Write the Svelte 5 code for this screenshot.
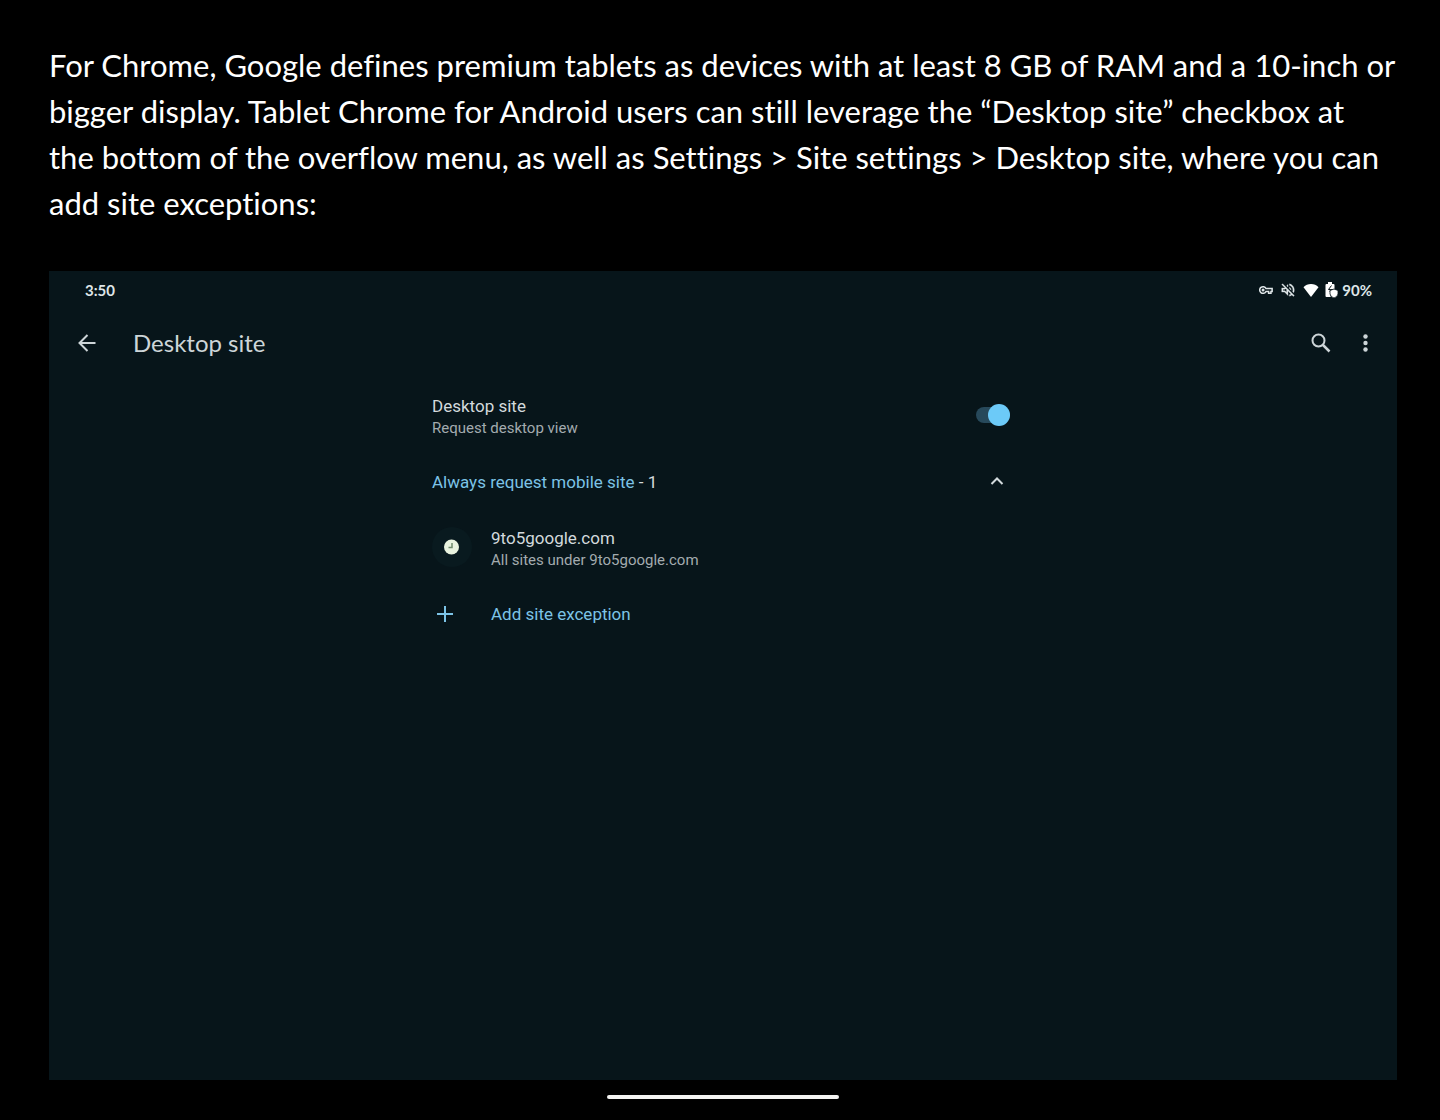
<script lang="ts">
  let desktopSite = true;
  let expanded = true;

  const exceptions = [
    { host: "9to5google.com", detail: "All sites under 9to5google.com" },
  ];
</script>

<style>
  :global(body) {
    margin: 0;
    background: #000;
  }

  .page {
    box-sizing: border-box;
    min-height: 100vh;
    padding: 42px 43px 0 49px;
    display: flex;
    flex-direction: column;
    background: #000;
    color: #fff;
    font-family: Roboto, "Liberation Sans", sans-serif;
  }

  .article {
    margin: 0 0 45px;
    font-family: Lato, "Open Sans", sans-serif;
    font-size: 31px;
    line-height: 46px;
    font-variant-ligatures: none;
  }

  .line {
    display: block;
  }

  .screen {
    flex: 1;
    background: #07151a;
  }

  button {
    display: flex;
    padding: 0;
    border: 0;
    background: none;
    color: inherit;
    font: inherit;
    text-align: left;
    cursor: pointer;
  }

  svg {
    display: block;
    flex: none;
  }

  .status {
    display: flex;
    align-items: center;
    justify-content: space-between;
    height: 38px;
    padding: 0 25px 0 36px;
    color: #dfe6e8;
    font-family: Lato, sans-serif;
    font-size: 15px;
    font-weight: 700;
  }

  .tray {
    display: flex;
    align-items: center;
    gap: 8px;
  }

  .battery {
    display: flex;
    align-items: center;
    gap: 4px;
    margin-left: -2px;
  }

  .toolbar {
    display: flex;
    align-items: center;
    height: 68px;
    padding: 0 20px 0 26px;
    color: #cdd5d8;
  }

  h1 {
    flex: 1;
    margin: 0 0 0 34px;
    font-family: Lato, sans-serif;
    font-size: 24px;
    font-weight: 400;
    line-height: 28px;
  }

  .actions {
    display: flex;
    gap: 20px;
  }

  .settings {
    width: 582px;
    max-width: 100%;
    margin: 0 auto;
    padding-top: 18px;
    color: #d3dadd;
    font-size: 17px;
  }

  .row {
    display: flex;
    align-items: center;
    justify-content: space-between;
    width: 100%;
    line-height: 22px;
  }

  .label {
    display: block;
  }

  .detail {
    display: block;
    color: #a3abaf;
    font-size: 15px;
  }

  .pref {
    align-items: flex-start;
    height: 44px;
    cursor: pointer;
  }

  .switch {
    appearance: none;
    position: relative;
    width: 34px;
    height: 16px;
    margin: 12px 4px 0 0;
    border-radius: 8px;
    background: #27495b;
    cursor: pointer;
  }

  .switch::before {
    content: "";
    position: absolute;
    top: -3px;
    left: 0;
    width: 22px;
    height: 22px;
    border-radius: 50%;
    background: #9aa5aa;
  }

  .switch:checked::before {
    left: 12px;
    background: #6ccaf8;
  }

  .group {
    height: 86px;
    color: #d3dadd;
  }

  .group svg {
    margin-right: 5px;
  }

  .accent {
    color: #7cc3e6;
  }

  ul {
    margin: 0;
    padding: 2px 0 0;
    list-style: none;
  }

  .site {
    align-items: flex-start;
    justify-content: flex-start;
    gap: 19px;
    height: 44px;
  }

  .favicon {
    display: flex;
    align-items: center;
    justify-content: center;
    width: 40px;
    height: 40px;
    border-radius: 50%;
    background: #091a1f;
  }

  .add {
    justify-content: flex-start;
    gap: 34px;
    height: 86px;
  }

  .nav {
    display: flex;
    justify-content: center;
    height: 40px;
  }

  .pill {
    width: 232px;
    height: 4px;
    margin-top: 15px;
    border-radius: 2px;
    background: #f4f4f2;
  }
</style>

<div class="page">
  <p class="article">
    <span class="line">For Chrome, Google defines premium tablets as devices with at least 8 GB of RAM and a 10-inch or</span>
    <span class="line">bigger display. Tablet Chrome for Android users can still leverage the “Desktop site” checkbox at</span>
    <span class="line">the bottom of the overflow menu, as well as Settings &gt; Site settings &gt; Desktop site, where you can</span>
    <span class="line">add site exceptions:</span>
  </p>

  <main class="screen">
    <div class="status">
      <span>3:50</span>
      <div class="tray">
        <!-- vpn key -->
        <svg width="14" height="14" viewBox="0 0 24 24" fill="none" stroke="currentColor" stroke-width="2.600">
          <path d="M12 9.500H22.500v5h-2v3h-4v-3H12A5.700 5.700 0 1 1 12 9.500z" />
          <circle cx="7" cy="12" r="1.300" fill="currentColor" />
        </svg>
        <!-- muted -->
        <svg width="14" height="14" viewBox="2 2 20 20" fill="currentColor" stroke="currentColor" stroke-width=".4">
          <path d="M4.300 3 3 4.300 7.300 8.600 7 9H3v6h4l5 5v-6.600l4.200 4.200c-.7.500-1.400.9-2.200 1.100v2.100c1.400-.3 2.600-.9 3.600-1.700l2.100 2.100L21 19.900zM10 15.200 7.800 13H5v-2h2.800l.9-.9L10 11.400zM19 12c0 .8-.2 1.600-.4 2.300l1.500 1.500c.6-1.100.9-2.400.9-3.800 0-4.300-3-7.900-7-8.800v2.100c2.900.9 5 3.500 5 6.700zM12 4 10.100 5.900 12 7.800zM16.500 12c0-1.800-1-3.300-2.500-4v1.800l2.500 2.500z" />
        </svg>
        <!-- wifi -->
        <svg width="16" height="16" viewBox="0 0 16 16" fill="#fff">
          <path d="M8 15 .5 5.300C2.500 3 5 2 8 2s5.500 1 7.500 3.300z" />
        </svg>
        <div class="battery">
          <!-- battery with shield -->
          <svg width="13" height="18" viewBox="0 0 13 18" fill="#fff">
            <path d="M.5 4q0-1 1-1H3V1h4v2h1.500q1 0 1 1v4H6L5 9v5q.2 1.200 1 2H1.500q-1 0-1-1z" />
            <path d="M6.500 4.500 3.500 8.500H5.500L5 11" fill="none" stroke="#07151a" />
            <path d="m9 8 4 1.500V13q-.5 3-4 4-3.500-1-4-4V9.500z" stroke="#07151a" stroke-width=".8" />
          </svg>
          <span>90%</span>
        </div>
      </div>
    </div>

    <header class="toolbar">
      <button aria-label="Back">
        <svg width="24" height="24" viewBox="0 0 24 24" fill="none" stroke="currentColor" stroke-width="2">
          <path d="M20.500 12H5M12.500 4 4.500 12l8 8" />
        </svg>
      </button>
      <h1>Desktop site</h1>
      <div class="actions">
        <button aria-label="Search">
          <svg width="24" height="24" viewBox="0 0 24 24" fill="none" stroke="currentColor" stroke-width="2">
            <circle cx="9.500" cy="9.500" r="6" />
            <path d="m14 14 6.500 6.500" stroke-width="2.500" />
          </svg>
        </button>
        <button aria-label="More options">
          <svg width="24" height="24" viewBox="0 0 24 24" fill="currentColor">
            <circle cx="12.500" cy="5.500" r="2.200" />
            <circle cx="12.500" cy="12" r="2.200" />
            <circle cx="12.500" cy="18.500" r="2.200" />
          </svg>
        </button>
      </div>
    </header>

    <section class="settings">
      <label class="row pref">
        <span>
          <span class="label">Desktop site</span>
          <span class="detail">Request desktop view</span>
        </span>
        <input class="switch" type="checkbox" role="switch" bind:checked={desktopSite} />
      </label>

      <button class="row group" aria-expanded={expanded} on:click={() => (expanded = !expanded)}>
        <span><span class="accent">Always request mobile site</span> - {exceptions.length}</span>
        <svg width="24" height="24" viewBox="0 0 24 24" fill="none" stroke="currentColor" stroke-width="2">
          <path d={expanded ? "m6.500 14 5.500-5.500 5.500 5.500" : "m6.500 9 5.500 5.500L17.500 9"} />
        </svg>
      </button>

      {#if expanded}
        <ul>
          {#each exceptions as site}
            <li>
              <button class="row site">
                <span class="favicon">
                  <svg width="16" height="16" viewBox="0 0 16 16">
                    <circle cx="7.500" cy="8" r="7.500" fill="#e9f3df" />
                    <path d="M8 4V8.500H4.500" fill="none" stroke="#6f8a6c" stroke-width="1.500" />
                  </svg>
                </span>
                <span>
                  <span class="label">{site.host}</span>
                  <span class="detail">{site.detail}</span>
                </span>
              </button>
            </li>
          {/each}
        </ul>
        <button class="row add accent">
          <svg width="25" height="24" viewBox="0 0 25 24" fill="none" stroke="currentColor" stroke-width="2">
            <path d="M13 4v16M5 12h16" />
          </svg>
          Add site exception
        </button>
      {/if}
    </section>
  </main>

  <div class="nav"><div class="pill"></div></div>
</div>
